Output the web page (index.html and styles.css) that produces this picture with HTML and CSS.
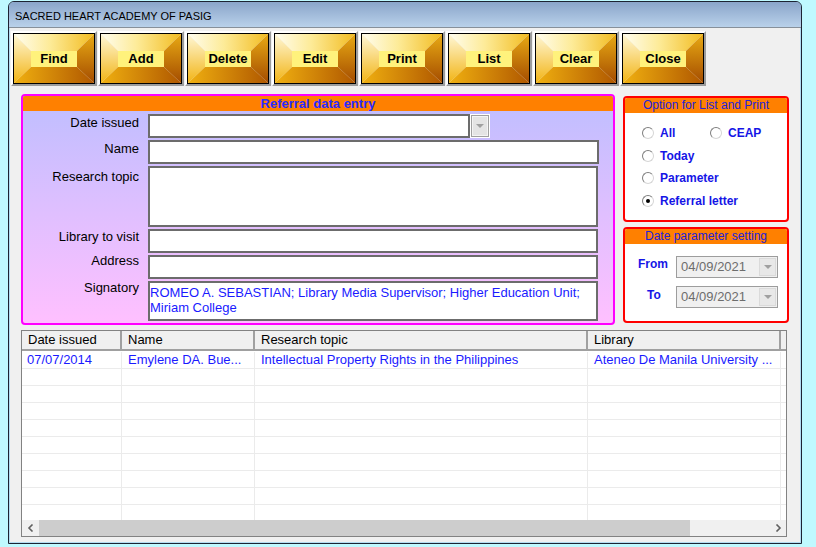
FILE: index.html
```html
<!DOCTYPE html>
<html>
<head>
<meta charset="utf-8">
<title>SACRED HEART ACADEMY OF PASIG</title>
<link rel="stylesheet" href="styles.css">
</head>
<body>
<div class="window">
  <div class="titlebar">SACRED HEART ACADEMY OF PASIG</div>
  <div class="client">
    <div class="toolbar">
      <div class="tbtn"><div class="tbtn-face"><svg class="bevel" viewBox="0 0 80 49"><use href="#bev"/></svg><span class="tbtn-label">Find</span></div></div>
      <div class="tbtn"><div class="tbtn-face"><svg class="bevel" viewBox="0 0 80 49"><use href="#bev"/></svg><span class="tbtn-label">Add</span></div></div>
      <div class="tbtn"><div class="tbtn-face"><svg class="bevel" viewBox="0 0 80 49"><use href="#bev"/></svg><span class="tbtn-label">Delete</span></div></div>
      <div class="tbtn"><div class="tbtn-face"><svg class="bevel" viewBox="0 0 80 49"><use href="#bev"/></svg><span class="tbtn-label">Edit</span></div></div>
      <div class="tbtn"><div class="tbtn-face"><svg class="bevel" viewBox="0 0 80 49"><use href="#bev"/></svg><span class="tbtn-label">Print</span></div></div>
      <div class="tbtn"><div class="tbtn-face"><svg class="bevel" viewBox="0 0 80 49"><use href="#bev"/></svg><span class="tbtn-label">List</span></div></div>
      <div class="tbtn"><div class="tbtn-face"><svg class="bevel" viewBox="0 0 80 49"><use href="#bev"/></svg><span class="tbtn-label">Clear</span></div></div>
      <div class="tbtn"><div class="tbtn-face"><svg class="bevel" viewBox="0 0 80 49"><use href="#bev"/></svg><span class="tbtn-label">Close</span></div></div>
    </div>

    <div class="middle">
      <section class="entry">
        <div class="entry-head">Referral data entry</div>
        <div class="form">
          <div class="lbl">Date issued</div>
          <div class="combo"><div class="field combo-field"></div><div class="combo-btn"><span class="tri"></span></div></div>
          <div class="lbl">Name</div>
          <div class="field field-wide"></div>
          <div class="lbl lbl-research">Research topic</div>
          <div class="field"></div>
          <div class="lbl lbl-library">Library to visit</div>
          <div class="field"></div>
          <div class="lbl lbl-address">Address</div>
          <div class="field"></div>
          <div class="lbl lbl-sign">Signatory</div>
          <div class="field field-text">ROMEO A. SEBASTIAN; Library Media Supervisor; Higher Education Unit; Miriam College</div>
        </div>
      </section>

      <div class="side">
        <section class="opt opt-list">
          <div class="opt-head">Option for List and Print</div>
          <div class="radios">
            <div class="radio"><span class="dot"></span>All</div>
            <div class="radio"><span class="dot"></span>CEAP</div>
            <div class="radio wide"><span class="dot"></span>Today</div>
            <div class="radio wide"><span class="dot"></span>Parameter</div>
            <div class="radio wide"><span class="dot checked"></span>Referral letter</div>
          </div>
        </section>
        <section class="opt opt-dates">
          <div class="opt-head">Date parameter setting</div>
          <div class="dates">
            <div class="dlbl">From</div>
            <div class="dcombo"><span class="dval">04/09/2021</span><span class="dbtn"><span class="tri"></span></span></div>
            <div class="dlbl dlbl-to">To</div>
            <div class="dcombo"><span class="dval">04/09/2021</span><span class="dbtn"><span class="tri"></span></span></div>
          </div>
        </section>
      </div>
    </div>

    <div class="list">
      <div class="list-head">
        <div class="hcell">Date issued</div>
        <div class="hcell">Name</div>
        <div class="hcell">Research topic</div>
        <div class="hcell">Library</div>
        <div class="hcell hcell-end"></div>
      </div>
      <div class="rows">
        <div class="row">
          <div class="cell first">07/07/2014</div>
          <div class="cell">Emylene DA. Bue...</div>
          <div class="cell">Intellectual Property Rights in the Philippines</div>
          <div class="cell">Ateneo De Manila University ...</div>
          <div class="cell"></div>
        </div>
        <div class="row"><div class="cell"></div><div class="cell"></div><div class="cell"></div><div class="cell"></div><div class="cell"></div></div>
        <div class="row"><div class="cell"></div><div class="cell"></div><div class="cell"></div><div class="cell"></div><div class="cell"></div></div>
        <div class="row"><div class="cell"></div><div class="cell"></div><div class="cell"></div><div class="cell"></div><div class="cell"></div></div>
        <div class="row"><div class="cell"></div><div class="cell"></div><div class="cell"></div><div class="cell"></div><div class="cell"></div></div>
        <div class="row"><div class="cell"></div><div class="cell"></div><div class="cell"></div><div class="cell"></div><div class="cell"></div></div>
        <div class="row"><div class="cell"></div><div class="cell"></div><div class="cell"></div><div class="cell"></div><div class="cell"></div></div>
        <div class="row"><div class="cell"></div><div class="cell"></div><div class="cell"></div><div class="cell"></div><div class="cell"></div></div>
        <div class="row"><div class="cell"></div><div class="cell"></div><div class="cell"></div><div class="cell"></div><div class="cell"></div></div>
        <div class="row"><div class="cell"></div><div class="cell"></div><div class="cell"></div><div class="cell"></div><div class="cell"></div></div>
      </div>
      <div class="hscroll">
        <div class="sbtn"><svg width="8" height="8" viewBox="0 0 8 8"><path d="M5.5 0.5 L2 4 L5.5 7.5" fill="none" stroke="#606060" stroke-width="1.6"/></svg></div>
        <div class="thumb"></div>
        <div class="track"></div>
        <div class="sbtn"><svg width="8" height="8" viewBox="0 0 8 8"><path d="M2.5 0.5 L6 4 L2.5 7.5" fill="none" stroke="#606060" stroke-width="1.6"/></svg></div>
      </div>
    </div>
  </div>
</div>

<svg class="defs" width="0" height="0" aria-hidden="true">
  <defs>
    <linearGradient id="gt" x1="0" y1="0" x2="1" y2="0">
      <stop offset="0" stop-color="#fffdf0"/>
      <stop offset="0.45" stop-color="#fdeb98"/>
      <stop offset="1" stop-color="#f2bc22"/>
    </linearGradient>
    <linearGradient id="gl" x1="0" y1="0" x2="0" y2="1">
      <stop offset="0" stop-color="#fff8d8"/>
      <stop offset="1" stop-color="#f2b414"/>
    </linearGradient>
    <linearGradient id="gr" x1="0" y1="0" x2="0" y2="1">
      <stop offset="0" stop-color="#e8aa14"/>
      <stop offset="1" stop-color="#a44c00"/>
    </linearGradient>
    <linearGradient id="gb" x1="0" y1="0" x2="1" y2="0">
      <stop offset="0" stop-color="#f0b010"/>
      <stop offset="1" stop-color="#b05800"/>
    </linearGradient>
    <symbol id="bev" viewBox="0 0 80 49">
      <polygon points="0,0 80,0 63,17 17,17" fill="url(#gt)"/>
      <polygon points="0,0 17,17 17,33 0,49" fill="url(#gl)"/>
      <polygon points="80,0 80,49 63,33 63,17" fill="url(#gr)"/>
      <polygon points="0,49 17,33 63,33 80,49" fill="url(#gb)"/>
      <rect x="17" y="17" width="46" height="16" fill="#f8d040"/>
    </symbol>
  </defs>
</svg>
</body>
</html>
```
FILE: styles.css
```css
* { box-sizing: border-box; }

body {
  margin: 0;
  width: 816px;
  height: 547px;
  overflow: hidden;
  background: #bff9ff;
  font-family: "Liberation Sans", Arial, sans-serif;
  color: #000;
}

.window {
  margin: 1px 0 0 8px;
  width: 794px;
  height: 543px;
  border: 1px solid #1c2433;
  border-radius: 6px 6px 0 0;
  background: #b3dcf1;
  display: flex;
  flex-direction: column;
}

.titlebar {
  height: 26px;
  flex: none;
  border-bottom: 1px solid #87909a;
  border-radius: 5px 5px 0 0;
  background: linear-gradient(#8aa5ca, #b9d1ea);
  padding: 4px 0 0 6px;
  font-size: 11px;
  line-height: 20px;
}

.client {
  flex: 1;
  margin: 0 1px 1px;
  background: #f0f0f0;
  padding: 3px 0 0 1px;
}

/* toolbar */
.toolbar { display: flex; gap: 1px; }

.tbtn {
  width: 86px;
  height: 55px;
  border: 2px solid;
  border-color: #ffffff #9c9c9c #9c9c9c #ffffff;
}

.tbtn-face {
  width: 82px;
  height: 51px;
  border: 1px solid #000;
  display: grid;
}
.tbtn-face > * { grid-area: 1 / 1; }

.bevel { display: block; width: 80px; height: 49px; }

.tbtn-label {
  align-self: start;
  justify-self: start;
  margin: 17px 0 0 17px;
  width: 46px;
  height: 16px;
  background: #fff27c;
  font-size: 13px;
  font-weight: bold;
  line-height: 16px;
  text-align: center;
}

/* middle */
.middle {
  display: flex;
  gap: 8px;
  margin-top: 8px;
  padding-left: 10px;
  height: 231px;
}

.entry {
  width: 594px;
  height: 231px;
  border: 2px solid #ff00ff;
  border-radius: 4px;
  background: linear-gradient(#bebeff, #ffc0ff);
  overflow: hidden;
}

.entry-head {
  height: 15px;
  background: #ff8000;
  color: #2a2aff;
  font-size: 13px;
  font-weight: bold;
  line-height: 15px;
  text-align: center;
}

.form {
  display: grid;
  grid-template-columns: 116px 450px;
  grid-template-rows: 24px 24px 61px 24px 24px 40px;
  column-gap: 9px;
  row-gap: 2px;
  padding-top: 3px;
}

.lbl {
  text-align: right;
  font-size: 13px;
  line-height: 15px;
  padding-top: 1px;
}
.lbl-research { padding-top: 3px; }
.lbl-library { padding-top: 0; }
.lbl-address { padding-top: 0; margin-top: -2px; }
.lbl-sign { padding-top: 0; margin-top: -1px; }

.field {
  background: #fff;
  border: 2px solid #6c6c6c;
}
.field-wide { width: 451px; }

.field-text {
  color: #1a1aff;
  font-size: 13px;
  line-height: 15px;
  padding: 2px 0 0 0;
}

.combo { display: flex; }
.combo-field { width: 322px; }
.combo-btn {
  width: 20px;
  border: 1px solid #fff;
  box-shadow: inset 0 0 0 1px #a0a0a0, inset 0 0 0 2px #f4f4f4;
  background: #e4e4e4;
  display: flex;
  align-items: center;
  justify-content: center;
}

.tri {
  width: 0;
  height: 0;
  border-left: 4px solid transparent;
  border-right: 4px solid transparent;
  border-top: 4px solid #a0a0a0;
}

/* side panels */
.side {
  width: 166px;
  display: flex;
  flex-direction: column;
  gap: 5px;
  padding-top: 2px;
}

.opt {
  border: 2px solid #ff0000;
  border-radius: 4px;
  background: #fff;
  overflow: hidden;
}
.opt-list { height: 126px; }
.opt-dates { height: 96px; }

.opt-head {
  height: 15px;
  background: #ff8000;
  color: #2222dd;
  font-size: 12px;
  line-height: 15px;
  text-align: center;
}

.radios {
  display: grid;
  grid-template-columns: 68px auto;
  grid-auto-rows: 22.5px;
  padding: 9px 0 0 17px;
}

.radio {
  display: flex;
  align-items: center;
  gap: 6px;
  color: #1515e6;
  font-size: 12px;
  font-weight: bold;
}
.radio.wide { grid-column: 1 / -1; }

.dot {
  width: 12px;
  height: 12px;
  border-radius: 50%;
  background: #fff;
  border: 1px solid;
  border-color: #7e7e7e #d6d6d6 #d6d6d6 #7e7e7e;
  display: flex;
  align-items: center;
  justify-content: center;
}
.dot.checked::after {
  content: "";
  width: 4px;
  height: 4px;
  border-radius: 50%;
  background: #000;
}

.dates {
  display: grid;
  grid-template-columns: 44px 102px;
  grid-auto-rows: 22px;
  column-gap: 1px;
  row-gap: 8px;
  padding: 12px 0 0 6px;
}

.dlbl {
  text-align: center;
  color: #1515e6;
  font-size: 12px;
  font-weight: bold;
  line-height: 15px;
  padding-top: 1px;
}
.dlbl-to { padding-top: 2px; padding-left: 2px; }

.dcombo {
  display: flex;
  align-items: stretch;
  border: 1px solid #9d9d9d;
  padding: 1px;
  background: #f0f0f0;
}
.dval {
  flex: 1;
  color: #6d6d6d;
  font-size: 13px;
  line-height: 18px;
  padding-left: 3px;
}
.dbtn {
  width: 17px;
  border: 1px solid #dadada;
  background: #e8e8e8;
  display: flex;
  align-items: center;
  justify-content: center;
}

/* list */
.list {
  margin: 5px 0 0 10px;
  width: 766px;
  height: 207px;
  border: 1px solid #828282;
  background: #fff;
}

.list-head, .row {
  display: grid;
  grid-template-columns: 100px 133px 333px 193px 5px;
}

.list-head {
  height: 20px;
  background: #f0f0f0;
  border-bottom: 2px solid #a0a0a0;
}

.hcell {
  border-right: 2px solid #a0a0a0;
  padding-left: 6px;
  font-size: 13px;
  line-height: 18px;
  white-space: nowrap;
}
.hcell-end { border-right: none; }

.rows {
  height: 169px;
  padding-top: 1px;
  overflow: hidden;
}

.row {
  height: 17px;
  border-bottom: 1px solid #ebebeb;
}

.cell {
  border-right: 1px solid #ebebeb;
  padding-left: 6px;
  font-size: 13px;
  line-height: 16px;
  color: #1a1aff;
  white-space: nowrap;
  overflow: hidden;
}
.cell.first { padding-left: 5px; }

.hscroll {
  height: 16px;
  display: flex;
  background: #f0f0f0;
}
.sbtn {
  width: 17px;
  display: flex;
  align-items: center;
  justify-content: center;
}
.thumb {
  width: 651px;
  background: #cdcdcd;
}
.track { flex: 1; }

.defs { display: block; width: 0; height: 0; }
```
